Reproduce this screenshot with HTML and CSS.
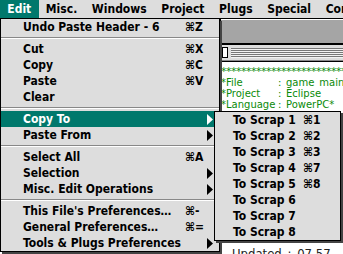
FILE: index.html
```html
<!DOCTYPE html>
<html>
<head>
<meta charset="utf-8">
<link rel="stylesheet" href="styles.css">
</head>
<body>
<div class="screen">
  <div class="menubar">
    <div class="mb-item active">Edit</div>
    <div class="mb-item">Misc.</div>
    <div class="mb-item">Windows</div>
    <div class="mb-item">Project</div>
    <div class="mb-item">Plugs</div>
    <div class="mb-item">Special</div>
    <div class="mb-item">Commands</div>
  </div>
  <div class="desk">
    <div class="window">
      <div class="w-top"></div>
      <div class="w-title"></div>
      <div class="w-line"></div>
      <div class="w-ruler"><div class="knob"></div><div class="stripes"></div></div>
      <div class="w-line2"></div>
      <div class="w-text">
        <div class="code stars">**************************************</div>
        <div class="code"><span class="ck">*File</span><span class="cc">:</span><span>game_main.c</span></div>
        <div class="code"><span class="ck">*Project</span><span class="cc">:</span><span>Eclipse</span></div>
        <div class="code"><span class="ck">*Language</span><span class="cc">:</span><span>PowerPC*</span></div>
        <div class="status">Updated : 07.57</div>
      </div>
    </div>
  </div>

  <div class="menu">
    <div class="row"><span class="label">Undo Paste Header - 6</span><span class="key">⌘Z</span></div>
    <div class="sep"></div>
    <div class="row"><span class="label">Cut</span><span class="key">⌘X</span></div>
    <div class="row"><span class="label">Copy</span><span class="key">⌘C</span></div>
    <div class="row"><span class="label">Paste</span><span class="key">⌘V</span></div>
    <div class="row"><span class="label">Clear</span></div>
    <div class="sep"></div>
    <div class="row hl"><span class="label">Copy To</span><span class="key"></span><span class="arrow"><svg width="6" height="11" viewBox="0 0 6 11"><polygon points="0,0 6,5.5 0,11"/></svg></span></div>
    <div class="row"><span class="label">Paste From</span><span class="key"></span><span class="arrow"><svg width="6" height="11" viewBox="0 0 6 11"><polygon points="0,0 6,5.5 0,11"/></svg></span></div>
    <div class="sep"></div>
    <div class="row"><span class="label">Select All</span><span class="key">⌘A</span></div>
    <div class="row"><span class="label">Selection</span><span class="key"></span><span class="arrow"><svg width="6" height="11" viewBox="0 0 6 11"><polygon points="0,0 6,5.5 0,11"/></svg></span></div>
    <div class="row"><span class="label">Misc. Edit Operations</span><span class="key"></span><span class="arrow"><svg width="6" height="11" viewBox="0 0 6 11"><polygon points="0,0 6,5.5 0,11"/></svg></span></div>
    <div class="sep"></div>
    <div class="row"><span class="label">This File's Preferences…</span><span class="key">⌘-</span></div>
    <div class="row"><span class="label">General Preferences…</span><span class="key">⌘=</span></div>
    <div class="row"><span class="label">Tools &amp; Plugs Preferences</span><span class="key"></span><span class="arrow"><svg width="6" height="11" viewBox="0 0 6 11"><polygon points="0,0 6,5.5 0,11"/></svg></span></div>
  </div>

  <div class="submenu">
    <div class="srow"><span class="slabel">To Scrap 1</span><span class="skey">⌘1</span></div>
    <div class="srow"><span class="slabel">To Scrap 2</span><span class="skey">⌘2</span></div>
    <div class="srow"><span class="slabel">To Scrap 3</span><span class="skey">⌘3</span></div>
    <div class="srow"><span class="slabel">To Scrap 4</span><span class="skey">⌘7</span></div>
    <div class="srow"><span class="slabel">To Scrap 5</span><span class="skey">⌘8</span></div>
    <div class="srow"><span class="slabel">To Scrap 6</span></div>
    <div class="srow"><span class="slabel">To Scrap 7</span></div>
    <div class="srow"><span class="slabel">To Scrap 8</span></div>
  </div>
</div>
</body>
</html>
```

FILE: styles.css
```css
html, body {
  margin: 0;
  padding: 0;
}
body {
  width: 343px;
  height: 254px;
  overflow: hidden;
  background: #fff;
  font-family: "DejaVu Sans Condensed", "DejaVu Sans", sans-serif;
  font-weight: bold;
  font-size: 12px;
  color: #000;
}
.screen {
  position: relative;
  width: 343px;
  height: 254px;
  overflow: hidden;
}
.menubar {
  display: flex;
  height: 18px;
  background: #dddddd;
  border-bottom: 1px solid #000;
  white-space: nowrap;
}
.mb-item {
  padding: 0 7.3px;
  line-height: 18px;
}
.mb-item.active {
  background: #00786c;
  color: #fff;
}
.desk {
  display: flex;
  padding-left: 220px;
  height: 235px;
}
.window {
  flex: 1;
  border-left: 1px solid #000;
  display: flex;
  flex-direction: column;
  min-width: 0;
}
.w-top {
  height: 1px;
  background: #fff;
}
.w-title {
  height: 23px;
  background: #a5a5a5;
}
.w-line {
  height: 2px;
  background: #000;
}
.w-ruler {
  height: 11px;
  padding: 2px 0 2px 1px;
  background: #dddddd;
  display: flex;
  gap: 3px;
}
.knob {
  width: 4px;
  height: 9px;
  background: #fff;
  border: 1px solid #000;
}
.stripes {
  flex: 1;
  margin-top: 1px;
  height: 10px;
  background: repeating-linear-gradient(to bottom, #777 0 1px, #f2f2f2 1px 2px);
}
.w-line2 {
  height: 1px;
  background: #888;
  border-bottom: 1px solid #000;
}
.w-text {
  flex: 1;
  background: #fff;
  padding-top: 4px;
  overflow: hidden;
}
.code {
  display: flex;
  font-family: "DejaVu Sans", sans-serif;
  font-weight: normal;
  font-size: 10px;
  line-height: 11px;
  height: 11px;
  color: #0a8a0a;
  white-space: pre;
  overflow: hidden;
}
.code.stars {
  letter-spacing: -0.5px;
  font-size: 11px;
}
.ck {
  width: 57px;
  flex: none;
}
.cc {
  width: 8px;
  flex: none;
}
.status {
  margin-top: 137px;
  padding-left: 11px;
  font-weight: normal;
  font-size: 13px;
  line-height: 14px;
  word-spacing: 2px;
  color: #222;
  white-space: nowrap;
}

.menu {
  position: absolute;
  left: 0;
  top: 19px;
  width: 218px;
  background: #dddddd;
  border: 1px solid #000;
  border-top: 0;
  box-shadow: 2px 2px 0 #444;
}
.row {
  display: flex;
  align-items: center;
  height: 16px;
  padding-left: 22px;
  white-space: nowrap;
}
.label {
  width: 162px;
  flex: none;
}
.key {
  width: 22px;
  flex: none;
}
.arrow {
  width: 12px;
  flex: none;
  display: flex;
  align-items: center;
}
.arrow svg {
  display: block;
  fill: #000;
}
.row.hl {
  background: #00786c;
  color: #fff;
}
.row.hl .arrow svg {
  fill: #fff;
}
.sep {
  height: 6px;
  display: flex;
  align-items: center;
}
.sep::before {
  content: "";
  flex: 1;
  height: 1px;
  background: #888;
  border-bottom: 1px solid #fff;
}

.submenu {
  position: absolute;
  left: 214px;
  top: 111px;
  width: 125px;
  background: #dddddd;
  border: 1px solid #000;
  box-shadow: 2px 2px 0 #444;
}
.srow {
  display: flex;
  align-items: center;
  height: 16px;
  padding-left: 18px;
  white-space: nowrap;
}
.slabel {
  width: 70px;
  flex: none;
}
```
